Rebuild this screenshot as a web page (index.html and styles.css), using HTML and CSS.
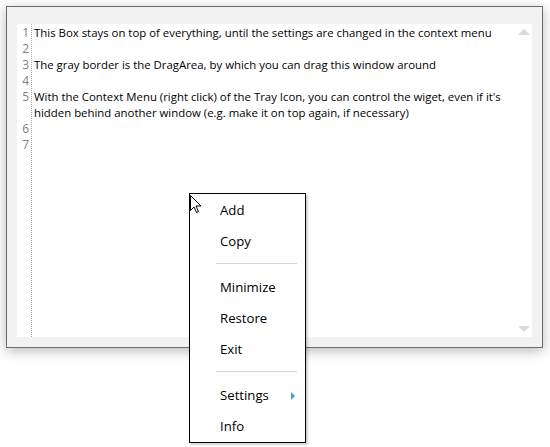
FILE: index.html
```html
<!DOCTYPE html>
<html>
<head>
<meta charset="utf-8">
<link rel="stylesheet" href="styles.css">
</head>
<body>
<div class="window">
  <div class="editor">
    <div class="gutter">
      <div>1</div><div>2</div><div>3</div><div>4</div><div>5</div><div>&nbsp;</div><div>6</div><div>7</div>
    </div>
    <div class="text">
      <div>This Box stays on top of everything, until the settings are changed in the context menu</div>
      <div>&nbsp;</div>
      <div>The gray border is the DragArea, by which you can drag this window around</div>
      <div>&nbsp;</div>
      <div>With the Context Menu (right click) of the Tray Icon, you can control the wiget, even if it's<br>hidden behind another window (e.g. make it on top again, if necessary)</div>
      <div>&nbsp;</div>
      <div>&nbsp;</div>
    </div>
    <div class="scrollbar">
      <span class="arrow up"></span>
      <span class="arrow down"></span>
    </div>
  </div>
</div>
<div class="menu">
  <div class="item">Add</div>
  <div class="item">Copy</div>
  <div class="sep"></div>
  <div class="item">Minimize</div>
  <div class="item">Restore</div>
  <div class="item">Exit</div>
  <div class="sep"></div>
  <div class="item sub">Settings<span class="subarrow"></span></div>
  <div class="item">Info</div>
  <svg class="cursor" width="12" height="19" viewBox="0 0 12 19"><path d="M0.5 0.5 L0.5 15.5 L4 12 L6.5 17.5 L8.5 16.5 L6 11 L11 11 Z" fill="#fff" stroke="#000" stroke-width="1"/></svg>
</div>
</body>
</html>
```
FILE: styles.css
```css
html, body { margin: 0; padding: 0; background: #fff; }
body {
  width: 550px; height: 447px; position: relative; overflow: hidden;
  font-family: "Segoe UI", "Open Sans", "Noto Sans", sans-serif;
}
.window {
  margin: 6px 0 0 6px;
  width: 537px;
  height: 342px;
  border: 1px solid #6b6b6b;
  background: #f2f2f2;
  box-shadow: 0 3px 12px rgba(0,0,0,0.28);
  padding: 17px 10px 10px 10px;
  box-sizing: border-box;
}
.editor {
  background: #fff;
  height: 100%;
  display: flex;
  position: relative;
  font-size: 11.4px;
  line-height: 16px;
}
.gutter {
  width: 12px;
  padding-top: 1px;
  text-align: right;
  color: #808080;
  font-size: 12px;
  padding-right: 2px;
  border-right: 1px dotted #a8a8a8;
}
.text {
  flex: 1;
  padding: 1px 0 0 2px;
  color: #000;
  white-space: nowrap;
}
.scrollbar {
  width: 17px;
  display: flex;
  flex-direction: column;
  justify-content: space-between;
  align-items: center;
  padding: 5px 0 5px 0;
}
.arrow {
  width: 0; height: 0;
  border-left: 6px solid transparent;
  border-right: 6px solid transparent;
}
.arrow.up { border-bottom: 6px solid #dadada; }
.arrow.down { border-top: 6px solid #dadada; }
.menu {
  position: absolute;
  left: 189px;
  top: 193px;
  width: 117px;
  box-sizing: border-box;
  border: 1px solid #000;
  padding-top: 1px;
  background: #fff;
  box-shadow: 2px 2px 2px rgba(0,0,0,0.18);
  font-size: 13.2px;
  color: #000;
}
.item {
  height: 31px;
  line-height: 31px;
  padding-left: 30px;
  position: relative;
}
.sep {
  height: 15px;
  position: relative;
}
.sep::after {
  content: "";
  position: absolute;
  left: 26px; right: 8px; top: 6px;
  border-top: 1px solid #d5d5d5;
}
.subarrow {
  position: absolute;
  right: 10px;
  top: 12px;
  width: 0; height: 0;
  border-top: 4px solid transparent;
  border-bottom: 4px solid transparent;
  border-left: 4px solid #3c9ee0;
}
.cursor {
  position: absolute;
  left: 0; top: 1px;
}
```
